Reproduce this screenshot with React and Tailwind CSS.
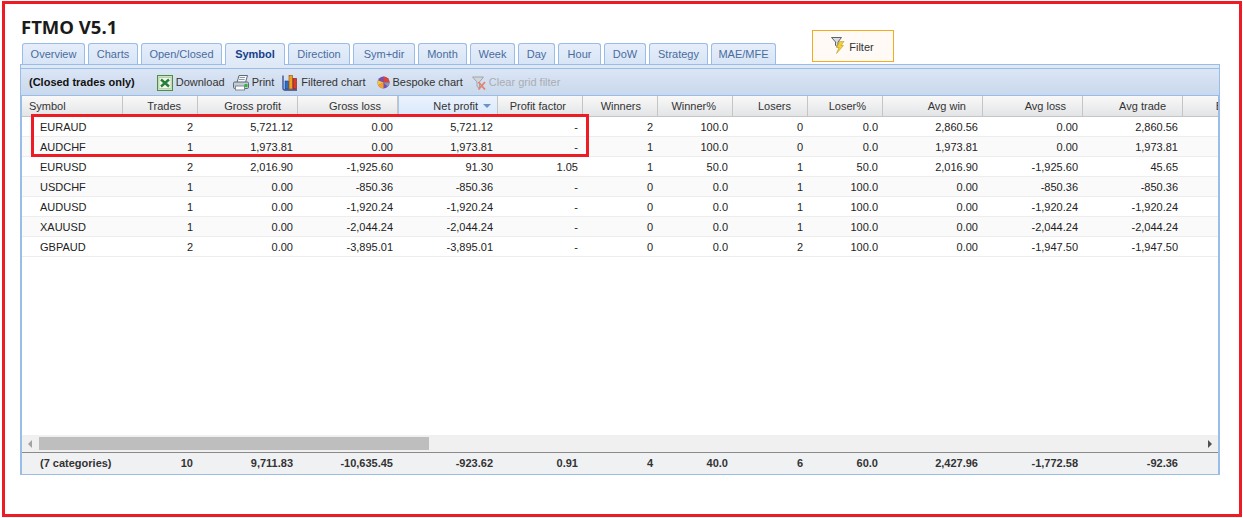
const tabs = [
  ['Overview', 63], ['Charts', 50], ['Open/Closed', 81], ['Symbol', 60], ['Direction', 62], ['Sym+dir', 62], ['Month', 49],
  ['Week', 45], ['Day', 37], ['Hour', 43], ['DoW', 42], ['Strategy', 59], ['MAE/MFE', 65],
]

const columns = [
  ['Symbol', 101], ['Trades', 75], ['Gross profit', 100], ['Gross loss', 100], ['Net profit', 100], ['Profit factor', 85],
  ['Winners', 75], ['Winner%', 75], ['Losers', 75], ['Loser%', 75], ['Avg win', 100], ['Avg loss', 100], ['Avg trade', 100], ['Best trade', 100],
]

const rows = [
  ['EURAUD', '2', '5,721.12', '0.00', '5,721.12', '-', '2', '100.0', '0', '0.0', '2,860.56', '0.00', '2,860.56'],
  ['AUDCHF', '1', '1,973.81', '0.00', '1,973.81', '-', '1', '100.0', '0', '0.0', '1,973.81', '0.00', '1,973.81'],
  ['EURUSD', '2', '2,016.90', '-1,925.60', '91.30', '1.05', '1', '50.0', '1', '50.0', '2,016.90', '-1,925.60', '45.65'],
  ['USDCHF', '1', '0.00', '-850.36', '-850.36', '-', '0', '0.0', '1', '100.0', '0.00', '-850.36', '-850.36'],
  ['AUDUSD', '1', '0.00', '-1,920.24', '-1,920.24', '-', '0', '0.0', '1', '100.0', '0.00', '-1,920.24', '-1,920.24'],
  ['XAUUSD', '1', '0.00', '-2,044.24', '-2,044.24', '-', '0', '0.0', '1', '100.0', '0.00', '-2,044.24', '-2,044.24'],
  ['GBPAUD', '2', '0.00', '-3,895.01', '-3,895.01', '-', '0', '0.0', '2', '100.0', '0.00', '-1,947.50', '-1,947.50'],
]

const totals = ['(7 categories)', '10', '9,711.83', '-10,635.45', '-923.62', '0.91', '4', '40.0', '6', '60.0', '2,427.96', '-1,772.58', '-92.36']

function ExcelIcon() {
  return (
    <svg width="16" height="16" viewBox="0 0 16 16" className="shrink-0">
      <rect x="0.5" y="0.5" width="15" height="15" fill="#cfe3c4" stroke="#4c8f45" />
      <rect x="2" y="2.5" width="12" height="11" fill="#f2f7ee" stroke="#a5c99b" strokeWidth="0.700" />
      <path d="M4 4.500l8 7M12 4.500l-8 7" stroke="#25803a" strokeWidth="2.400" />
    </svg>
  )
}

function PrintIcon() {
  return (
    <svg width="16" height="16" viewBox="0 0 16 16" className="shrink-0">
      <path d="M6 0.500h8.500l-2 7H4z" fill="#f7f9fb" stroke="#5f6a78" />
      <path d="M6.500 2.500h5.500M6 4.500h5.500" stroke="#8f9aa7" />
      <rect x="0.500" y="7" width="15" height="6.500" rx="1.200" fill="#c3cdd8" stroke="#5d6876" />
      <rect x="2.500" y="11" width="9" height="4" fill="#ffffff" stroke="#7e8894" />
      <rect x="11.500" y="9" width="3" height="3" fill="#2fb53a" />
    </svg>
  )
}

function ChartIcon() {
  return (
    <svg width="16" height="17" viewBox="0 0 16 17" className="shrink-0">
      <path d="M1 1.500v13c0 1 .6 1.500 1.500 1.500H15" fill="none" stroke="#2b4a8c" strokeWidth="1.300" />
      <rect x="3" y="7" width="3.500" height="8" fill="#2c6ccc" stroke="#1d3a78" strokeWidth="0.600" />
      <rect x="7" y="1.500" width="3.500" height="13.500" fill="#f0a21f" stroke="#8a4b10" strokeWidth="0.600" />
      <rect x="11" y="4.500" width="3.500" height="10.500" fill="#dc3a2a" stroke="#7a1a14" strokeWidth="0.600" />
    </svg>
  )
}

function PieIcon() {
  return (
    <svg width="13" height="13" viewBox="0 0 14 14" className="shrink-0">
      <circle cx="7" cy="7" r="6.500" fill="#7a4fb0" />
      <path d="M7 7V.5A6.500 6.500 0 0 1 13.500 7z" fill="#d8463a" />
      <path d="M7 7h6.500a6.500 6.500 0 0 1-2 4.700z" fill="#8a97a8" />
      <path d="M7 7l-5.800 3A6.500 6.500 0 0 1 1 4.500z" fill="#f2c534" />
      <path d="M7 7L1.200 10A6.500 6.500 0 0 0 7 13.500z" fill="#f0a030" />
    </svg>
  )
}

function ClearFilterIcon() {
  return (
    <svg width="14" height="14" viewBox="0 0 14 14" className="shrink-0">
      <path d="M0.500 1h11L7.500 6V12L5 10.500V6z" fill="#d3d6db" stroke="#a0a5ad" />
      <path d="M6.500 6l6.500 7.500M13 6l-6.500 7.500" stroke="#e2826f" strokeWidth="1.800" />
    </svg>
  )
}

function FilterIcon() {
  return (
    <svg width="14" height="17" viewBox="0 0 14 17" className="-mt-[2px] shrink-0">
      <path d="M0.500 0.500h10L7 5V10L4.500 8.500V5z" fill="#d9dbde" stroke="#5f646b" />
      <path d="M8.500 4.500L5.500 10.500h2.500L5.500 16.500l7-8H10l3-4z" fill="#f4d035" stroke="#ad8a18" strokeWidth="0.500" />
    </svg>
  )
}

function ToolItem({ icon, label, muted, className }) {
  return (
    <div className={`flex items-center gap-[3px] ${className}`}>
      {icon}
      <span className={muted ? 'text-[#a9adb3]' : 'text-[#333333]'}>{label}</span>
    </div>
  )
}

function GridRow({ cells, className, bold }) {
  return (
    <div className={`flex shrink-0 items-center ${className}`}>
      {cells.map((c, i) => (
        <div
          key={i}
          style={{ width: columns[i][1] }}
          className={`shrink-0 ${i === 0 ? 'pl-[18px] text-left' : 'pr-[5px] text-right'} ${bold ? 'font-bold' : ''}`}
        >
          {c}
        </div>
      ))}
    </div>
  )
}

export default function App() {
  return (
    <div className="ml-[2px] mt-[1px] h-[516px] w-[1240px] border-[3px] border-[#ed1c24] bg-white pl-[15px] font-['Liberation_Sans',Arial,sans-serif]">
      <div className="flex items-end pl-[2px] pt-[14px]">
        <div>
          <h1 className="-ml-[1px] -mt-[2px] h-[27px] font-['Open_Sans',sans-serif] text-[18.5px] leading-[22px] font-bold text-[#1a1a1a]">FTMO V5.1</h1>
          <div className="flex gap-[3px]">
            {tabs.map(([name, w]) => (
              <div
                key={name}
                style={{ width: w }}
                className={
                  name === 'Symbol'
                    ? 'relative z-10 -mb-[1px] flex h-[22px] items-center justify-center rounded-t-[3px] border border-b-0 border-[#99bce8] bg-gradient-to-b from-[#e9f0fa] to-[#dfe9f6] text-[11px] font-bold text-[#15428b]'
                    : 'flex h-[21px] items-center justify-center rounded-t-[3px] border border-b-0 border-[#99bce8] bg-gradient-to-b from-[#e6eefa] to-[#d8e5f6] text-[11px] text-[#4a6c9e]'
                }
              >
                {name}
              </div>
            ))}
          </div>
        </div>
        <div className="mb-[2px] ml-[36px] flex h-[32px] w-[82px] items-center justify-center gap-[4px] border border-[#f4ab1e] bg-[#fffaf5] pr-[1px] text-[11px] text-[#333333]">
          <FilterIcon />
          <span className="pt-[2px]">Filter</span>
        </div>
      </div>

      <div className="relative h-[411px] w-[1200px] border border-[#99bce8] bg-white">
        <div className="h-[4px] border-b border-[#99bce8] bg-[#dfe9f6]" />
        <div className="flex h-[27px] items-center border-b border-[#99bce8] bg-gradient-to-b from-[#dbe6f5] to-[#c9d8ec] pl-[8px] pt-[1px] text-[11px]">
          <span className="font-bold text-[#111111]">(Closed trades only)</span>
          <ToolItem className="ml-[22px]" icon={<ExcelIcon />} label="Download" />
          <ToolItem className="ml-[8px]" icon={<PrintIcon />} label="Print" />
          <ToolItem className="ml-[8px]" icon={<ChartIcon />} label="Filtered chart" />
          <ToolItem className="ml-[11px]" icon={<PieIcon />} label="Bespoke chart" />
          <ToolItem className="ml-[9px]" icon={<ClearFilterIcon />} label="Clear grid filter" muted />
        </div>

        <div className="flex h-[378px] flex-col overflow-hidden border-x border-[#99bce8] text-[11px] text-[#222222]">
          <div className="flex h-[21px] shrink-0 border-b border-[#c5c5c5] bg-gradient-to-b from-[#f9f9f9] to-[#e3e4e6]">
            {columns.map(([name, w], i) => (
              <div
                key={name}
                style={{ width: w }}
                className={`flex shrink-0 items-center border-r border-[#c5c5c5] text-[#333333] ${i === 0 ? 'pl-[7px]' : 'justify-end pr-4'} ${name === 'Net profit' ? 'border-l border-l-[#a9c6ec] bg-gradient-to-b from-[#ebf3fd] to-[#d9e8fb] !pr-[19px]' : ''}`}
              >
                {name}
                {name === 'Net profit' && (
                  <svg width="8" height="4" viewBox="0 0 8 4" className="-mr-[13px] ml-[5px] shrink-0">
                    <path d="M0 0h8L4 4z" fill="#6a93c8" />
                  </svg>
                )}
              </div>
            ))}
          </div>

          {rows.map((r, i) => (
            <GridRow key={r[0]} cells={r} className={`h-5 border-b border-[#ededed] pt-[1px] ${i % 2 ? 'bg-[#fafafa]' : 'bg-white'}`} />
          ))}

          <div className="flex-1" />

          <div className="flex h-[17px] shrink-0 items-center bg-[#f0f0f0]">
            <div className="ml-[6px] h-0 w-0 border-y-[4px] border-r-[4px] border-y-transparent border-r-[#a3a3a3]" />
            <div className="ml-[7px] h-[13px] w-[390px] bg-[#bebebe]" />
            <div className="ml-auto mr-[6px] h-0 w-0 border-y-[4px] border-l-[4px] border-y-transparent border-l-[#505050]" />
          </div>

          <div className="h-[22px] shrink-0 border-t-[1px] border-[#8a8a8a] bg-[#f0f1f3] pt-[1px] font-bold text-[#333333]">
            <GridRow cells={totals} className="h-[19px]" bold />
          </div>
        </div>

        {/* red highlight drawn over the two best rows */}
        <div className="pointer-events-none absolute left-[10px] top-[49px] h-[43px] w-[558px] border-[3px] border-[#ed1c24]" />
      </div>
    </div>
  )
}
